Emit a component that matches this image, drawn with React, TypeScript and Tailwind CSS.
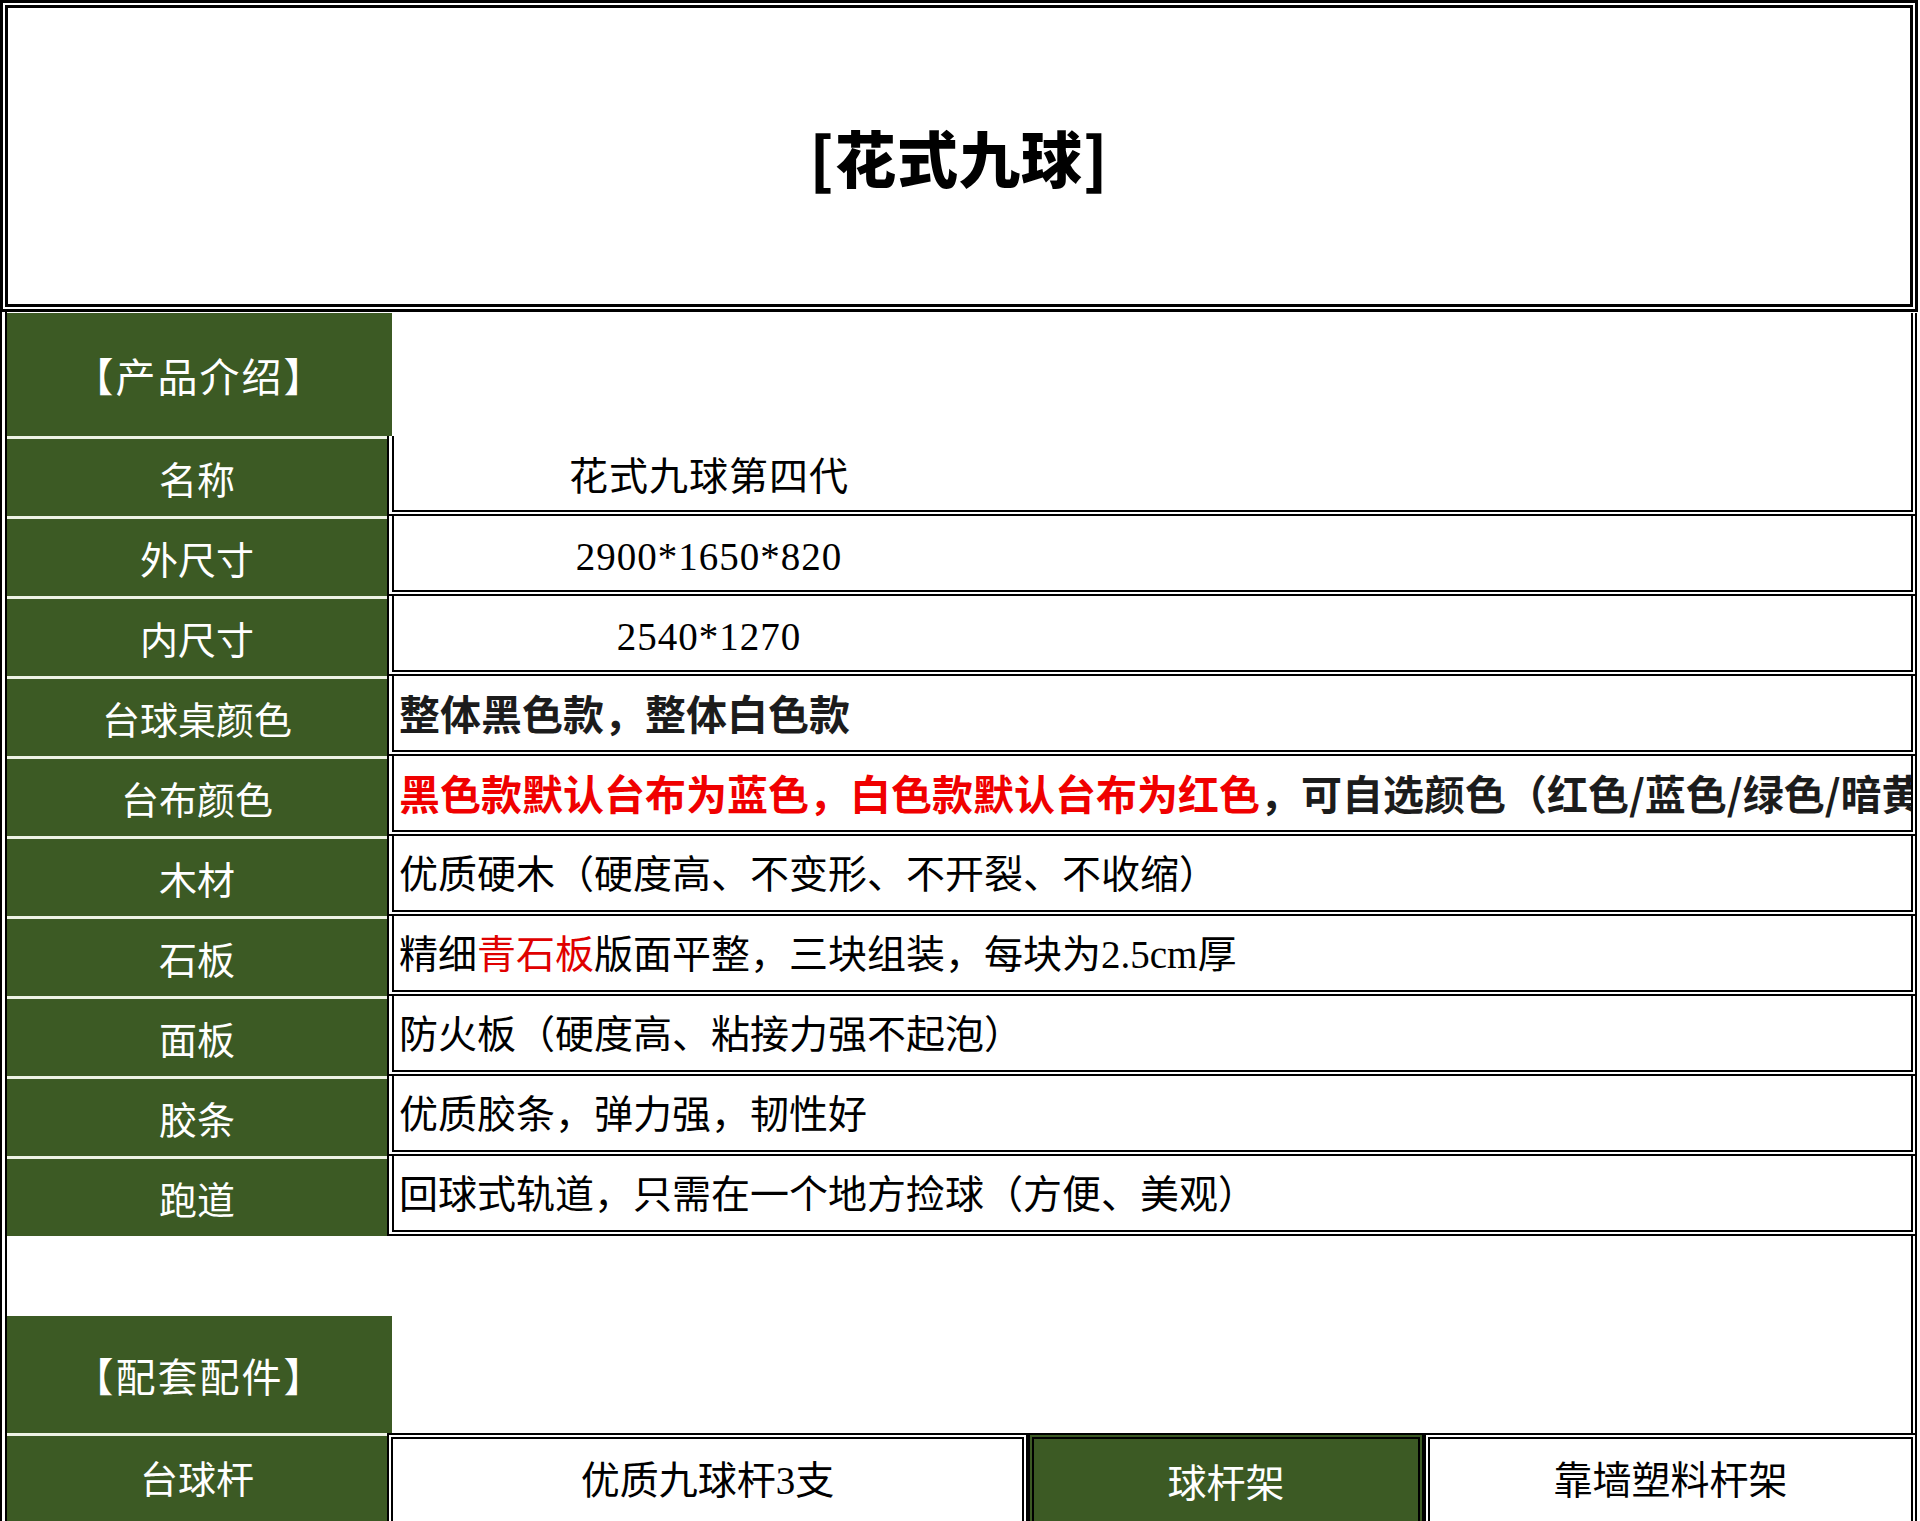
import type { ReactNode } from 'react';

const serif = "font-['Liberation_Serif','Noto_Sans_CJK_SC',serif]";

type Row = { label: string; value: ReactNode; center?: boolean };

const rows: Row[] = [
  { label: '名称', value: '花式九球第四代', center: true },
  { label: '外尺寸', value: '2900*1650*820', center: true },
  { label: '内尺寸', value: '2540*1270', center: true },
  {
    label: '台球桌颜色',
    value: (
      <span className="font-['Noto_Sans_CJK_SC',sans-serif] font-bold text-[41px] text-[#1c1c1c]">
        整体黑色款，整体白色款
      </span>
    ),
  },
  {
    label: '台布颜色',
    value: (
      <span className="font-['Noto_Sans_CJK_SC',sans-serif] font-bold text-[41px] text-[#1c1c1c]">
        <span className="text-[#f00000]">黑色款默认台布为蓝色，白色款默认台布为红色</span>
        ，可自选颜色（红色/蓝色/绿色/暗黄色）
      </span>
    ),
  },
  { label: '木材', value: '优质硬木（硬度高、不变形、不开裂、不收缩）' },
  {
    label: '石板',
    value: (
      <>
        精细<span className="text-[#e00000]">青石板</span>版面平整，三块组装，每块为2.5cm厚
      </>
    ),
  },
  { label: '面板', value: '防火板（硬度高、粘接力强不起泡）' },
  { label: '胶条', value: '优质胶条，弹力强，韧性好' },
  { label: '跑道', value: '回球式轨道，只需在一个地方捡球（方便、美观）' },
];

function Label({ children }: { children: ReactNode }) {
  return (
    <div className="w-[380px] shrink-0 bg-[#3c5a24] text-white text-[38px] flex items-center justify-center border-t-[3px] border-[#eef3e6]">
      {children}
    </div>
  );
}

function Header({ children }: { children: ReactNode }) {
  return (
    <div className="w-[385px] shrink-0 bg-[#3c5a24] text-white text-[40px] tracking-[2px] flex items-center justify-center">
      {children}
    </div>
  );
}

export default function App() {
  return (
    <div className="w-[1920px] h-[1521px] overflow-hidden bg-white text-black font-['Noto_Sans_CJK_SC',sans-serif]">
      {/* title */}
      <div className="h-[312px] mr-[2px] border-[8px] border-double border-black flex items-center justify-center">
        <h1 className="text-[61px] font-black leading-none tracking-[1px]">[花式九球]</h1>
      </div>

      <div className="mr-[3px] border-l-[7px] border-double border-black flex flex-col">
        {/* 产品介绍 header */}
        <div className="flex h-[123px] mt-[1px]">
          <Header>【产品介绍】</Header>
          <div className="flex-1 border-r-[6px] border-double border-black" />
        </div>

        {rows.map((r) => (
          <div key={r.label} className="flex h-[80px]">
            <Label>{r.label}</Label>
            <div
              className={`flex-1 min-w-0 flex items-center overflow-hidden whitespace-nowrap border-l-[7px] border-b-[6px] border-r-[6px] border-double border-black text-[39px] leading-none ${serif}`}
            >
              {r.center ? (
                <div className="w-[630px] pt-[6px] text-center tracking-[1px]">{r.value}</div>
              ) : (
                <div className="pl-[5px] pt-[2px]">{r.value}</div>
              )}
            </div>
          </div>
        ))}

        {/* spacer */}
        <div className="flex h-[80px]">
          <div className="w-[380px] shrink-0" />
          <div className="flex-1 border-r-[6px] border-double border-black" />
        </div>

        {/* 配套配件 header */}
        <div className="flex h-[117px]">
          <Header>【配套配件】</Header>
          <div className="flex-1 border-r-[6px] border-double border-black" />
        </div>

        {/* 台球杆 row */}
        <div className="flex h-[100px]">
          <Label>
            <span className="-mt-[16px]">台球杆</span>
          </Label>
          <div
            className={`w-[641px] shrink-0 flex justify-center pt-[22px] border-[6px] border-double border-black text-[39px] leading-none ${serif}`}
          >
            优质九球杆3支
          </div>
          <div className="w-[396px] shrink-0 flex justify-center pt-[22px] bg-[#3c5a24] border-[6px] border-double border-black text-white text-[39px] leading-none">
            球杆架
          </div>
          <div
            className={`flex-1 flex justify-center pt-[22px] border-[6px] border-double border-black text-[39px] leading-none ${serif}`}
          >
            靠墙塑料杆架
          </div>
        </div>
      </div>
    </div>
  );
}
